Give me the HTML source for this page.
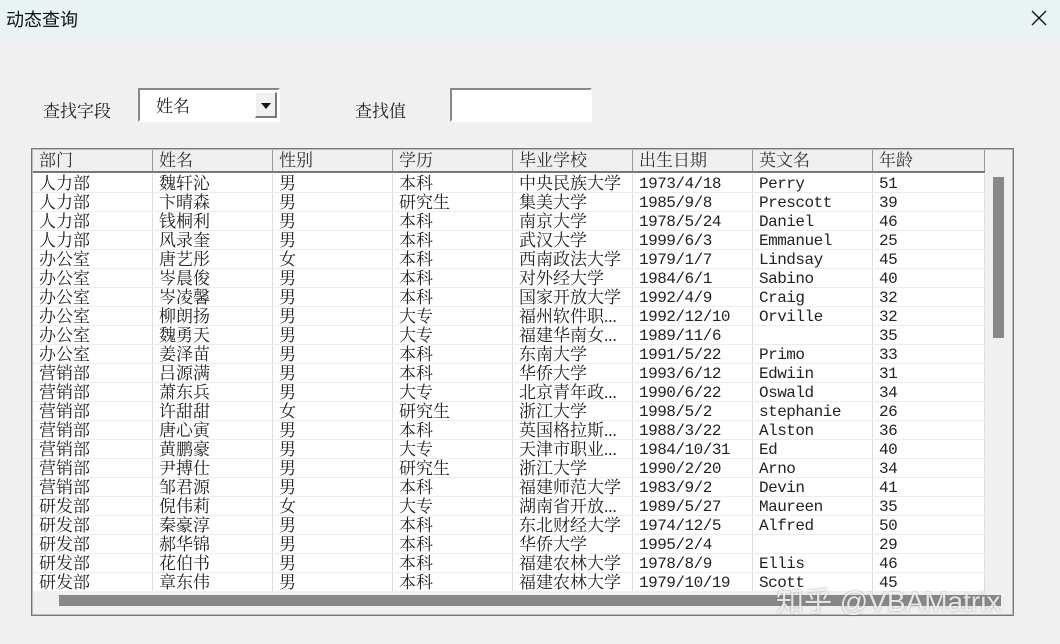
<!DOCTYPE html>
<html><head><meta charset="utf-8">
<style>
*{margin:0;padding:0;box-sizing:border-box}
body{width:1060px;height:644px;background:#f0f0f0;position:relative;overflow:hidden;font-family:"Liberation Serif","Noto Serif CJK SC",serif;color:#222}
.title{position:absolute;left:0;top:0;width:1060px;height:40px;background:#eaf3f4}
.title span{position:absolute;left:6px;top:6px;font:18px "Liberation Sans","Noto Sans CJK SC",sans-serif;color:#111}
.x{position:absolute;left:1029px;top:8px;width:20px;height:20px}
.lbl{position:absolute;font-size:17px;top:97px}
.combo{position:absolute;left:138px;top:88px;width:142px;height:34px;background:#fff;border:2px solid #888;border-right-color:#fff;border-bottom-color:#fff}
.combo span{position:absolute;left:16px;top:2px;font-size:17px}
.btn{position:absolute;right:1px;top:2px;width:22px;height:26px;background:#f0f0f0;border:1px solid #fff;border-right:2px solid #777;border-bottom:2px solid #777}
.btn:after{content:"";position:absolute;left:5px;top:10px;border-left:5px solid transparent;border-right:5px solid transparent;border-top:6px solid #111}
.txt{position:absolute;left:450px;top:88px;width:142px;height:34px;background:#fff;border:2px solid #888;border-right-color:#fff;border-bottom-color:#fff}
.lb{position:absolute;left:31px;top:148px;width:983px;height:468px;border:1px solid #777;background:#f0f0f0}
.lb:before{content:"";position:absolute;left:0;top:0;right:0;bottom:0;border:1px solid #bbb;pointer-events:none}
.grid{position:absolute;left:1px;top:1px;width:952px;height:441px;overflow:hidden;background:#fff}
.hd{position:absolute;left:0;top:0;height:23px;width:952px;background:#efefef;border-bottom:2px solid #777}
.hd div,.r div{position:absolute;top:0;width:120px;height:100%;padding-left:6px;font-size:17px;line-height:21px;white-space:nowrap;border-right:1px solid #ddd}
.hd div{border-right:1px solid #999;line-height:22px;color:#333}
.r{position:absolute;left:0;height:19px;width:952px;border-bottom:1px solid #ececec}
.r div{line-height:20px}
.c0{left:0}.c1{left:120px}.c2{left:240px}.c3{left:360px}.c4{left:480px}.c5{left:600px}.c6{left:720px}.c7{left:840px;width:112px!important}
.m{font-family:"Liberation Mono","Noto Sans CJK SC",monospace;font-size:16px!important;letter-spacing:-0.5px}
.vs{position:absolute;left:961px;top:28px;width:11px;height:161px;background:#888}
.hs{position:absolute;left:27px;top:446px;width:942px;height:11px;background:#888}
.wm{position:absolute;left:776px;top:580px;font:28px "Liberation Sans","Noto Sans CJK SC",sans-serif;color:rgba(255,255,255,.8);text-shadow:0 0 2px rgba(100,100,100,.6)}
</style></head><body>
<div class="title"><span>动态查询</span>
<svg class="x" viewBox="0 0 20 20"><path d="M3 3L17 17M17 3L3 17" stroke="#111" stroke-width="1.4"/></svg></div>
<div class="lbl" style="left:43px">查找字段</div>
<div class="combo"><span>姓名</span><div class="btn"></div></div>
<div class="lbl" style="left:355px">查找值</div>
<div class="txt"></div>
<div class="lb">
<div class="grid">
<div class="hd"><div class="c0">部门</div><div class="c1">姓名</div><div class="c2">性别</div><div class="c3">学历</div><div class="c4">毕业学校</div><div class="c5">出生日期</div><div class="c6">英文名</div><div class="c7">年龄</div></div>
<div class="r" style="top:24px"><div class="c0">人力部</div><div class="c1">魏轩沁</div><div class="c2">男</div><div class="c3">本科</div><div class="c4">中央民族大学</div><div class="c5 m">1973/4/18</div><div class="c6 m">Perry</div><div class="c7 m">51</div></div>
<div class="r" style="top:43px"><div class="c0">人力部</div><div class="c1">卞晴森</div><div class="c2">男</div><div class="c3">研究生</div><div class="c4">集美大学</div><div class="c5 m">1985/9/8</div><div class="c6 m">Prescott</div><div class="c7 m">39</div></div>
<div class="r" style="top:62px"><div class="c0">人力部</div><div class="c1">钱桐利</div><div class="c2">男</div><div class="c3">本科</div><div class="c4">南京大学</div><div class="c5 m">1978/5/24</div><div class="c6 m">Daniel</div><div class="c7 m">46</div></div>
<div class="r" style="top:81px"><div class="c0">人力部</div><div class="c1">风录奎</div><div class="c2">男</div><div class="c3">本科</div><div class="c4">武汉大学</div><div class="c5 m">1999/6/3</div><div class="c6 m">Emmanuel</div><div class="c7 m">25</div></div>
<div class="r" style="top:100px"><div class="c0">办公室</div><div class="c1">唐艺彤</div><div class="c2">女</div><div class="c3">本科</div><div class="c4">西南政法大学</div><div class="c5 m">1979/1/7</div><div class="c6 m">Lindsay</div><div class="c7 m">45</div></div>
<div class="r" style="top:119px"><div class="c0">办公室</div><div class="c1">岑晨俊</div><div class="c2">男</div><div class="c3">本科</div><div class="c4">对外经大学</div><div class="c5 m">1984/6/1</div><div class="c6 m">Sabino</div><div class="c7 m">40</div></div>
<div class="r" style="top:138px"><div class="c0">办公室</div><div class="c1">岑凌馨</div><div class="c2">男</div><div class="c3">本科</div><div class="c4">国家开放大学</div><div class="c5 m">1992/4/9</div><div class="c6 m">Craig</div><div class="c7 m">32</div></div>
<div class="r" style="top:157px"><div class="c0">办公室</div><div class="c1">柳朗扬</div><div class="c2">男</div><div class="c3">大专</div><div class="c4">福州软件职...</div><div class="c5 m">1992/12/10</div><div class="c6 m">Orville</div><div class="c7 m">32</div></div>
<div class="r" style="top:176px"><div class="c0">办公室</div><div class="c1">魏勇天</div><div class="c2">男</div><div class="c3">大专</div><div class="c4">福建华南女...</div><div class="c5 m">1989/11/6</div><div class="c6 m"></div><div class="c7 m">35</div></div>
<div class="r" style="top:195px"><div class="c0">办公室</div><div class="c1">姜泽苗</div><div class="c2">男</div><div class="c3">本科</div><div class="c4">东南大学</div><div class="c5 m">1991/5/22</div><div class="c6 m">Primo</div><div class="c7 m">33</div></div>
<div class="r" style="top:214px"><div class="c0">营销部</div><div class="c1">吕源满</div><div class="c2">男</div><div class="c3">本科</div><div class="c4">华侨大学</div><div class="c5 m">1993/6/12</div><div class="c6 m">Edwiin</div><div class="c7 m">31</div></div>
<div class="r" style="top:233px"><div class="c0">营销部</div><div class="c1">萧东兵</div><div class="c2">男</div><div class="c3">大专</div><div class="c4">北京青年政...</div><div class="c5 m">1990/6/22</div><div class="c6 m">Oswald</div><div class="c7 m">34</div></div>
<div class="r" style="top:252px"><div class="c0">营销部</div><div class="c1">许甜甜</div><div class="c2">女</div><div class="c3">研究生</div><div class="c4">浙江大学</div><div class="c5 m">1998/5/2</div><div class="c6 m">stephanie</div><div class="c7 m">26</div></div>
<div class="r" style="top:271px"><div class="c0">营销部</div><div class="c1">唐心寅</div><div class="c2">男</div><div class="c3">本科</div><div class="c4">英国格拉斯...</div><div class="c5 m">1988/3/22</div><div class="c6 m">Alston</div><div class="c7 m">36</div></div>
<div class="r" style="top:290px"><div class="c0">营销部</div><div class="c1">黄鹏豪</div><div class="c2">男</div><div class="c3">大专</div><div class="c4">天津市职业...</div><div class="c5 m">1984/10/31</div><div class="c6 m">Ed</div><div class="c7 m">40</div></div>
<div class="r" style="top:309px"><div class="c0">营销部</div><div class="c1">尹搏仕</div><div class="c2">男</div><div class="c3">研究生</div><div class="c4">浙江大学</div><div class="c5 m">1990/2/20</div><div class="c6 m">Arno</div><div class="c7 m">34</div></div>
<div class="r" style="top:328px"><div class="c0">营销部</div><div class="c1">邹君源</div><div class="c2">男</div><div class="c3">本科</div><div class="c4">福建师范大学</div><div class="c5 m">1983/9/2</div><div class="c6 m">Devin</div><div class="c7 m">41</div></div>
<div class="r" style="top:347px"><div class="c0">研发部</div><div class="c1">倪伟莉</div><div class="c2">女</div><div class="c3">大专</div><div class="c4">湖南省开放...</div><div class="c5 m">1989/5/27</div><div class="c6 m">Maureen</div><div class="c7 m">35</div></div>
<div class="r" style="top:366px"><div class="c0">研发部</div><div class="c1">秦豪淳</div><div class="c2">男</div><div class="c3">本科</div><div class="c4">东北财经大学</div><div class="c5 m">1974/12/5</div><div class="c6 m">Alfred</div><div class="c7 m">50</div></div>
<div class="r" style="top:385px"><div class="c0">研发部</div><div class="c1">郝华锦</div><div class="c2">男</div><div class="c3">本科</div><div class="c4">华侨大学</div><div class="c5 m">1995/2/4</div><div class="c6 m"></div><div class="c7 m">29</div></div>
<div class="r" style="top:404px"><div class="c0">研发部</div><div class="c1">花伯书</div><div class="c2">男</div><div class="c3">本科</div><div class="c4">福建农林大学</div><div class="c5 m">1978/8/9</div><div class="c6 m">Ellis</div><div class="c7 m">46</div></div>
<div class="r" style="top:423px"><div class="c0">研发部</div><div class="c1">章东伟</div><div class="c2">男</div><div class="c3">本科</div><div class="c4">福建农林大学</div><div class="c5 m">1979/10/19</div><div class="c6 m">Scott</div><div class="c7 m">45</div></div>
</div>
<div class="vs"></div>
<div class="hs"></div>
</div>
<div class="wm">知乎 @VBAMatrix</div>
</body></html>
